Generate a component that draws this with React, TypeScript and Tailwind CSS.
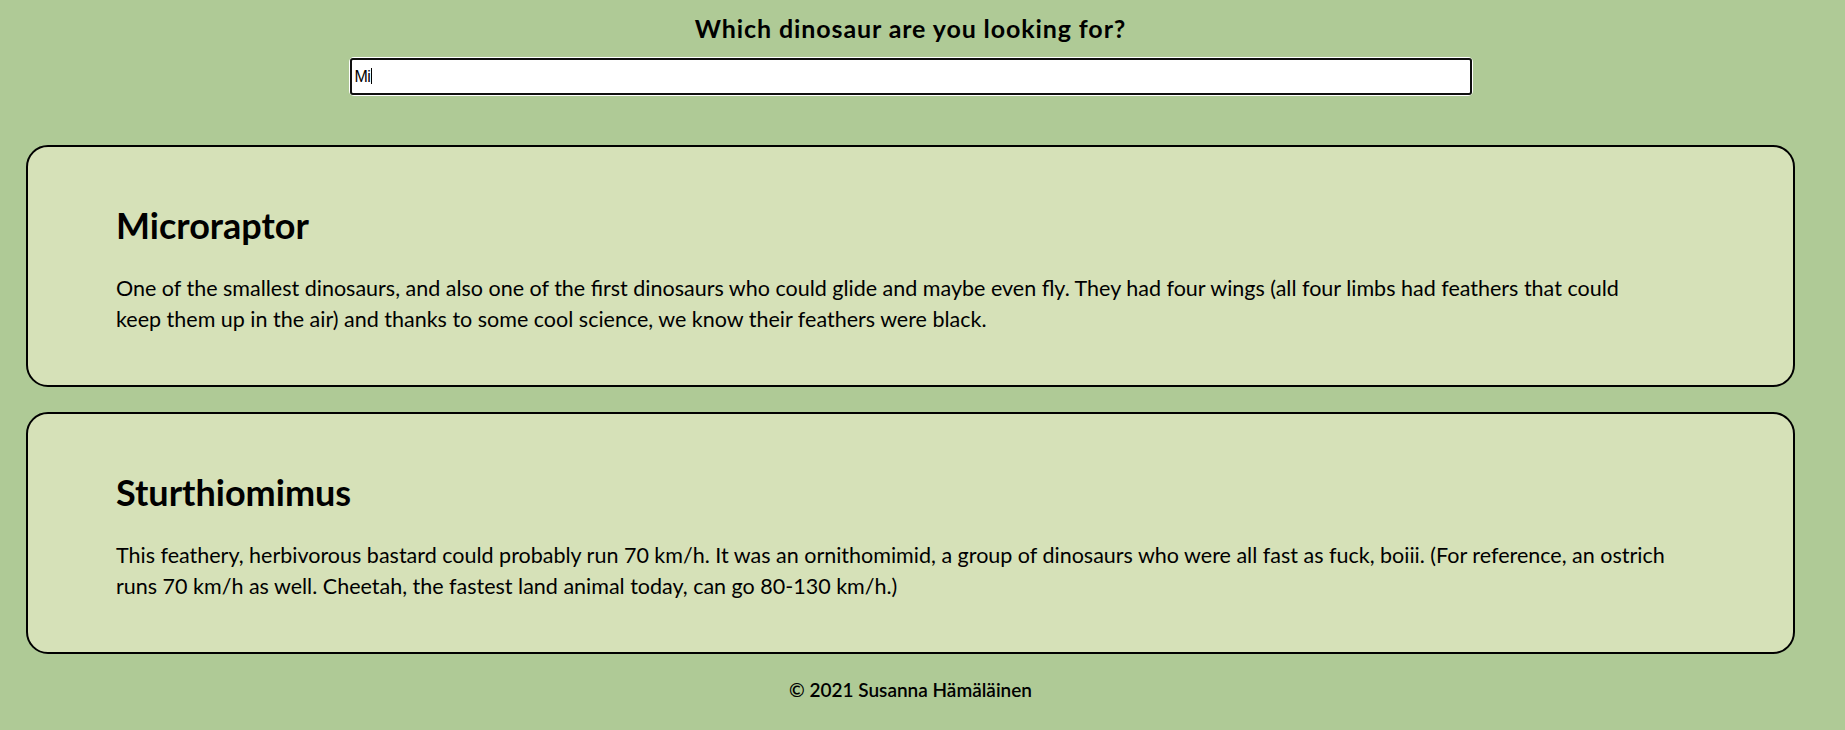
import React from "react";

const dinos = [
  {
    name: "Microraptor",
    lines: [
      "One of the smallest dinosaurs, and also one of the first dinosaurs who could glide and maybe even fly. They had four wings (all four limbs had feathers that could",
      "keep them up in the air) and thanks to some cool science, we know their feathers were black.",
    ],
  },
  {
    name: "Sturthiomimus",
    lines: [
      "This feathery, herbivorous bastard could probably run 70 km/h. It was an ornithomimid, a group of dinosaurs who were all fast as fuck, boiii. (For reference, an ostrich",
      "runs 70 km/h as well. Cheetah, the fastest land animal today, can go 80-130 km/h.)",
    ],
  },
];

export default function App() {
  return (
    <div className="min-h-screen bg-[#afca96] font-['Lato',sans-serif] text-black">
      <div className="mr-[24px]">
        <header className="flex flex-col items-center pt-[10px]">
          <h1 className="text-[25px] font-bold leading-[36px] tracking-[0.9px]">Which dinosaur are you looking for?</h1>
          <div className="relative mt-[12px] rounded-[4px] ring-1 ring-white">
            <input
              readOnly
              value="Mi"
              className="block h-[37px] w-[1122px] rounded-[3px] border-2 border-[#101010] bg-white px-[3px] font-['Liberation_Sans',sans-serif] text-[16px] tracking-[-0.5px] text-black outline-none"
            />
            <span className="absolute left-[21px] top-[10px] h-[16px] w-px bg-black" />
          </div>
        </header>

        <main className="mt-[50px] flex flex-col gap-[25px] px-[26px]">
          {dinos.map((d) => (
            <section
              key={d.name}
              className="rounded-[22px] border-2 border-black bg-[#d6e1b8] pl-[88px] pr-[90px] pt-[56px] pb-[50px]"
            >
              <h2 className="text-[36px] font-bold leading-[44px]">{d.name}</h2>
              <p className="mt-[26px] text-[21.5px] leading-[31px]">
                {d.lines[0]}
                <br />
                {d.lines[1]}
              </p>
            </section>
          ))}
        </main>

        <footer className="pt-[22px] pb-[20px] text-center text-[19px] font-semibold leading-[28px]">
          © 2021 Susanna Hämäläinen
        </footer>
      </div>
    </div>
  );
}
